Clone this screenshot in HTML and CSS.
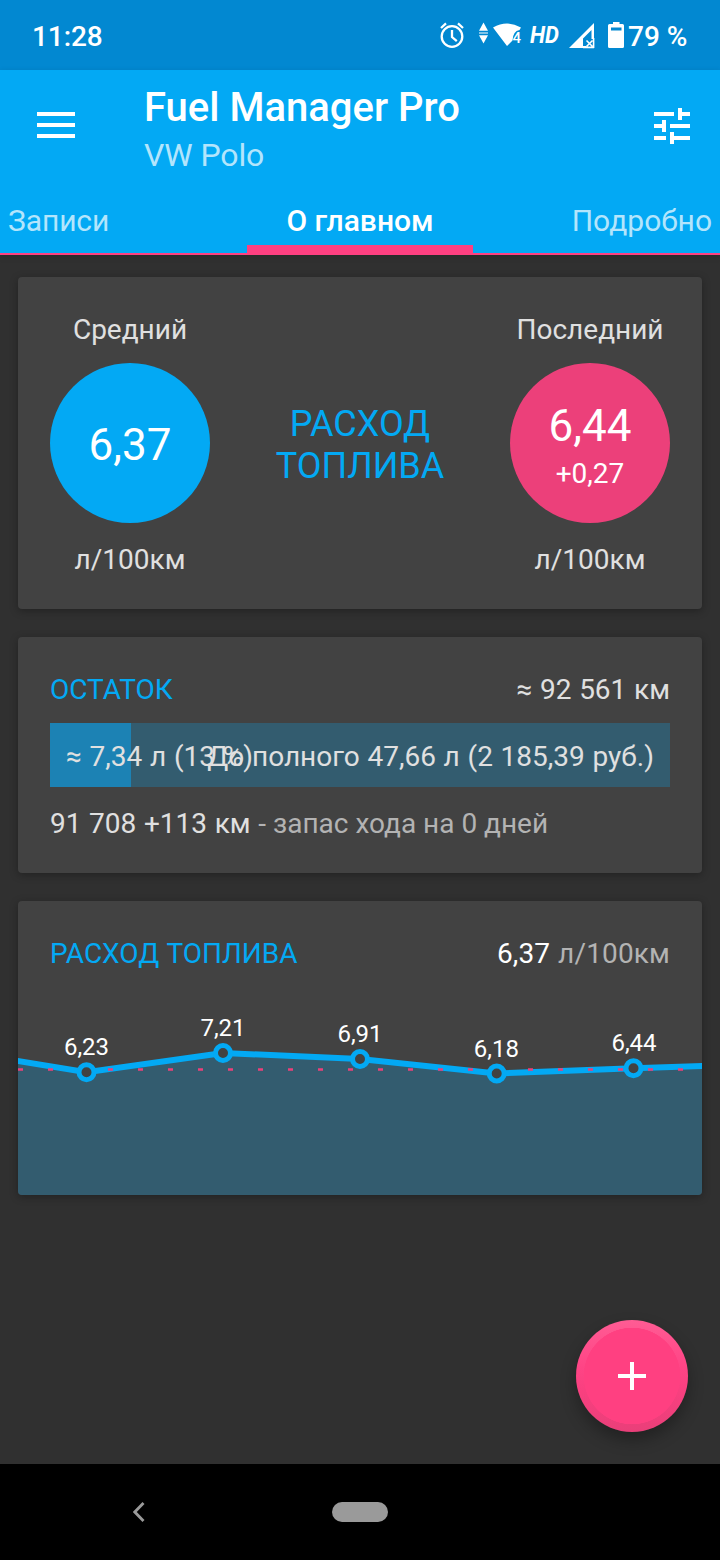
FILE: index.html
```html
<!DOCTYPE html>
<html lang="ru">
<head>
  <meta charset="UTF-8" />
  <meta name="viewport" content="width=device-width, initial-scale=1.0"/>
  <title>Fuel Manager Pro</title>
  <link rel="stylesheet" href="styles.css">
</head>
<body>

  <div class="status-bar">
    <span class="time">11:28</span>
    <svg class="status-icons" width="188" height="70" viewBox="437 0 188 70" fill="#fff">
      <!-- Будильник -->
      <g fill="none" stroke="#fff" stroke-width="2.3">
        <circle cx="452" cy="36.5" r="10.3"/>
        <path d="M452 30v7l4.8 4.2M441 28l5-4.6M463 28l-5-4.6"/>
      </g>
      <!-- Wi-Fi -->
      <path d="M479 30.8l4.5-8.3 4.5 8.3zM479 35.2l4.5 8.300 4.5-8.300zM479 32.400h9v1.200h-9z"/>
      <path d="M493 27.5Q507 19.5 521 27.5L519.5 30Q513 31 512.5 40.5L507 46z"/>
      <text class="wifi-num" x="512.500" y="43">4</text>
      <text class="hd" x="530" y="43" textLength="29" lengthAdjust="spacingAndGlyphs">HD</text>
      <!-- Сеть -->
      <path d="M594 23v16h-2.5v-9l-8.5 8.5V46h3v2h-17z"/>
      <path d="M586.5 40.5l6 6m0-6l-6 6M583 47.4h11M593.6 38v10" stroke="#fff" stroke-width="1.6"/>
      <!-- Батарея -->
      <path fill-rule="evenodd" d="M613 22h6.500v2h3q1.500 0 1.500 1.500v21q0 1.500-1.500 1.500h-13q-1.500 0-1.500-1.500v-21q0-1.500 1.500-1.500h3.500zM611 27.500v3h10.500v-3z"/>
    </svg>
    <span class="battery">79 %</span>
  </div>

  <header class="header">
    <div class="app-bar">
      <button class="btn-menu" aria-label="Меню"><span></span><span></span><span></span></button>
      <div class="titles">
        <h1>Fuel Manager Pro</h1>
        <p>VW Polo</p>
      </div>
      <svg class="tune" width="48" height="48" viewBox="0 0 24 24" fill="#fff">
        <path d="M3 17v2h6v-2H3zM3 5v2h10V5H3zm10 16v-2h8v-2h-8v-2h-2v6h2zM7 9v2H3v2h4v2h2V9H7zm14 4v-2H11v2h10zm-6-4h2V7h4V5h-4V3h-2v6z"/>
      </svg>
    </div>
    <nav class="tabs">
      <a>Записи</a>
      <a class="active">О главном</a>
      <a>Подробно</a>
    </nav>
  </header>

  <main>
    <!-- Средний и последний расход -->
    <section class="card summary">
      <div class="gauge">
        <span>Средний</span>
        <div class="circle"><strong>6,37</strong></div>
        <span>л/100км</span>
      </div>
      <h2>РАСХОД<br>ТОПЛИВА</h2>
      <div class="gauge">
        <span>Последний</span>
        <div class="circle pink"><strong>6,44</strong><small>+0,27</small></div>
        <span>л/100км</span>
      </div>
    </section>

    <!-- Остаток топлива -->
    <section class="card rest">
      <div class="card-head">
        <h3>ОСТАТОК</h3>
        <span>≈ 92 561 км</span>
      </div>
      <div class="tank">
        <div class="tank-fill" style="width: 13.1%"></div>
        <span class="tank-left">≈ 7,34 л (13 %)</span>
        <span class="tank-right">До полного 47,66 л (2 185,39 руб.)</span>
      </div>
      <p>91 708 +113 км <span class="muted">- запас хода на 0 дней</span></p>
    </section>

    <!-- График расхода -->
    <section class="card chart-card">
      <div class="card-head">
        <h3>РАСХОД ТОПЛИВА</h3>
        <span class="muted"><b>6,37</b> л/100км</span>
      </div>
      <svg class="chart" width="684" height="195" viewBox="0 0 684 195">
        <path class="area" d="M0 61L68.500 72.300 205 53 342 59 478.700 73.500 615.500 68.300 684 66V195H0z"/>
        <path class="line" d="M-2 60.700L68.500 72.300 205 53 342 59 478.700 73.500 615.500 68.300 686 65.900"/>
        <path class="average" d="M0 69.500H684"/>
        <g class="points">
          <circle cx="68.500" cy="72.300" r="7.500"/>
          <circle cx="205" cy="53" r="7.500"/>
          <circle cx="342" cy="59" r="7.500"/>
          <circle cx="478.700" cy="73.500" r="7.500"/>
          <circle cx="615.500" cy="68.300" r="7.500"/>
        </g>
        <g class="labels">
          <text x="68.500" y="55">6,23</text>
          <text x="205" y="36">7,21</text>
          <text x="342" y="42">6,91</text>
          <text x="478.300" y="57">6,18</text>
          <text x="616" y="51">6,44</text>
        </g>
      </svg>
    </section>
  </main>

  <button class="fab" aria-label="Добавить">
    <svg width="28" height="28" viewBox="0 0 28 28"><path d="M14 0v28M0 14h28" stroke="#fff" stroke-width="4"/></svg>
  </button>

  <footer class="nav-bar">
    <svg width="12" height="20" viewBox="0 0 12 20"><path d="M10.500 1L1.800 10l8.700 9" fill="none" stroke="#9a9a9a" stroke-width="2.800"/></svg>
    <span class="home"></span>
  </footer>

</body>
</html>
```
FILE: styles.css
```css
* {
  box-sizing: border-box;
}

body {
  font-family: Roboto, sans-serif;
  font-size: 28px;
  line-height: 38px;
  background-color: #303030;
  color: #e0e0e0;
  margin: 0;
  width: 720px;
  height: 1560px;
  display: flex;
  flex-direction: column;
  overflow: hidden;
}

h1, h2, h3, p {
  margin: 0;
  font-weight: 400;
}

button {
  border: none;
  padding: 0;
  cursor: pointer;
}

/* Строка состояния */
.status-bar {
  display: flex;
  align-items: center;
  height: 70px;
  padding: 0 32px;
  background: #0288d1;
  color: #fff;
  font-weight: 500;
  flex-shrink: 0;
}

.time {
  flex: 1;
  padding-top: 4px;
  letter-spacing: -0.1px;
}

.battery {
  width: 60px;
  margin-left: 3px;
  padding-top: 4px;
  white-space: nowrap;
}

.hd {
  font-size: 23px;
  font-weight: 700;
  font-style: italic;
}

.wifi-num {
  font-size: 15px;
  font-weight: 500;
}

/* Шапка */
.header {
  background: #03a9f4;
  color: #fff;
  box-shadow: 0 2px 6px rgba(0,0,0,0.15);
}

.app-bar {
  display: flex;
  align-items: flex-start;
  height: 117px;
  padding: 13px 24px 0 37px;
}

.btn-menu {
  display: flex;
  flex-direction: column;
  gap: 7px;
  width: 38px;
  margin-top: 29px;
  background: none;
}

.btn-menu span {
  width: 38px;
  height: 4px;
  background: #fff;
}

.titles {
  flex: 1;
  margin-left: 69px;
}

.titles h1 {
  font-size: 40px;
  line-height: 50px;
  font-weight: 500;
}

.titles p {
  font-size: 32px;
  line-height: 44px;
  letter-spacing: -0.1px;
  color: #b3e5fc;
}

.tune {
  margin-top: 19px;
}

/* Вкладки */
.tabs {
  display: flex;
  justify-content: space-between;
  height: 68px;
  padding: 0 8px;
  border-bottom: 2px solid #ff4081;
  font-size: 30px;
  line-height: 68px;
  color: #b3e5fc;
}

.tabs a {
  width: 226px;
}

.tabs a:first-child {
  letter-spacing: -0.1px;
}

.tabs a:last-child {
  text-align: right;
}

.tabs .active {
  position: relative;
  color: #fff;
  font-weight: 500;
  text-align: center;
}

.tabs .active::after {
  content: "";
  position: absolute;
  left: 0;
  right: 0;
  bottom: -2px;
  height: 10px;
  background: #ff4081;
}

/* Карточки */
main {
  flex: 1;
  display: flex;
  flex-direction: column;
  gap: 28px;
  padding: 22px 18px 0;
}

.card {
  background: #424242;
  border-radius: 4px;
  box-shadow: 0 2px 8px rgba(0,0,0,0.3);
  padding: 0 32px;
}

.card h2, .card h3 {
  color: #03a9f4;
}

.card h3 {
  font-size: 28px;
}

.card-head {
  display: flex;
  justify-content: space-between;
  word-spacing: 0.8px;
}

.muted {
  color: #b3b3b3;
}

.summary {
  display: flex;
  justify-content: space-between;
  height: 332px;
}

.summary h2 {
  font-size: 36px;
  line-height: 42px;
  text-align: center;
  margin-top: 126px;
}

.gauge {
  width: 160px;
  padding-top: 34px;
  display: flex;
  flex-direction: column;
  align-items: center;
}

.circle {
  width: 160px;
  height: 160px;
  margin: 14px 0 18px;
  border-radius: 50%;
  background: #03a9f4;
  color: #fff;
  display: flex;
  flex-direction: column;
  align-items: center;
  justify-content: center;
}

.circle strong {
  font-size: 44px;
  line-height: 56px;
  font-weight: 400;
  padding-top: 3px;
}

.circle small {
  font-size: 28px;
  line-height: 38px;
}

.circle.pink {
  padding-top: 2px;
  background: #ec407a;
}

.circle.pink strong {
  padding-top: 2px;
  line-height: 57px;
}

.rest {
  height: 236px;
  padding-top: 34px;
}

.rest p {
  word-spacing: 0.7px;
}

.rest p .muted {
  word-spacing: 0;
}

.tank {
  position: relative;
  display: flex;
  align-items: center;
  height: 64px;
  margin: 14px 0 18px;
  background: #335c6f;
}

.tank-fill {
  height: 64px;
  background: #1c82b4;
}

/* Подписи поверх шкалы */
.tank-left, .tank-right {
  position: absolute;
  top: 15px;
  white-space: nowrap;
  word-spacing: 0.8px;
}

.tank-left {
  left: 16px;
}

.tank-right {
  right: 16px;
}

/* График */
.chart-card {
  height: 294px;
  padding: 34px 0 0;
  overflow: hidden;
}

.chart-card .card-head {
  padding: 0 32px;
}

.chart-card span {
  letter-spacing: 0.15px;
}

.chart-card b {
  color: #fff;
  font-weight: 400;
}

.chart {
  display: block;
  margin-top: 27px;
}

.area {
  fill: #335c6f;
}

.line {
  fill: none;
  stroke: #03a9f4;
  stroke-width: 6;
}

.average {
  stroke: #ec407a;
  stroke-width: 2.5;
  stroke-dasharray: 5 25;
}

.points circle {
  fill: #424242;
  stroke: #03a9f4;
  stroke-width: 5;
}

.labels text {
  font-size: 24px;
  fill: #fff;
  text-anchor: middle;
}

/* Кнопка добавления */
.fab {
  position: absolute;
  left: 576px;
  top: 1320px;
  width: 112px;
  height: 112px;
  border-radius: 50%;
  display: flex;
  align-items: center;
  justify-content: center;
  background: radial-gradient(circle, #ff4081 48px, transparent 48.5px), linear-gradient(#ff5c94, #ff4586 40%, #fa4080 60%, #e93f79);
  box-shadow: 0 8px 16px rgba(0,0,0,0.3);
}

/* Нижняя панель */
.nav-bar {
  height: 96px;
  flex-shrink: 0;
  display: flex;
  align-items: center;
  padding-left: 133px;
  background: #000;
}

.home {
  width: 56px;
  height: 20px;
  margin-left: 187px;
  border-radius: 10px;
  background: #9a9a9a;
}
```
